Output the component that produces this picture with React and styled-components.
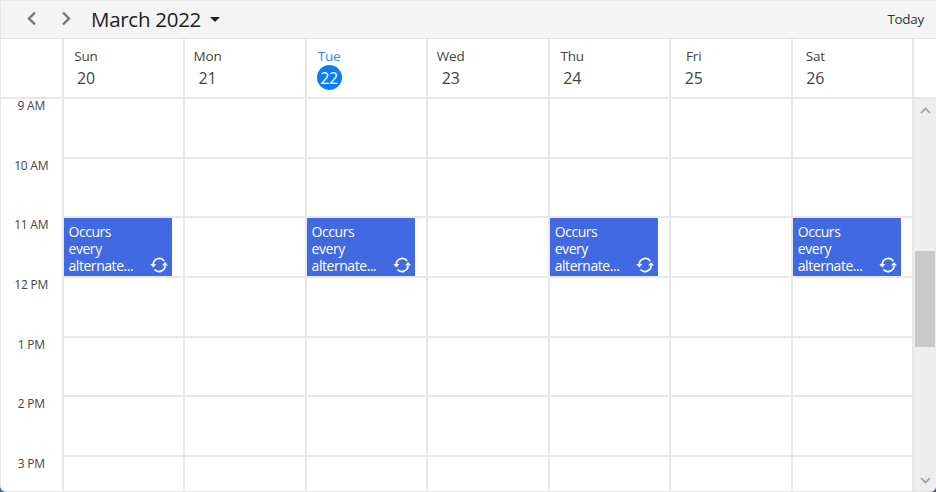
import React from "react";
import styled, { createGlobalStyle } from "styled-components";

const Global = createGlobalStyle`
  html, body { margin: 0; padding: 0; background: #3f5f8f; }
  * { box-sizing: border-box; }
`;

const Scheduler = styled.div`
  width: 936px;
  height: 492px;
  overflow: hidden;
  display: flex;
  flex-direction: column;
  font-family: "Open Sans", "Noto Sans", sans-serif;
  color: #333;
  background: #fff;
  border-left: 1px solid #e6e6e6;
  border-bottom: 1px solid #e6e6e6;
  border-radius: 0 0 6px 6px;
`;

const Toolbar = styled.div`
  height: 39px;
  flex: none;
  display: flex;
  align-items: center;
  background: #f4f4f4;
  border-bottom: 1px solid #e3e3e3;
  border-top: 1px solid #e8e8e8;
  padding: 0 12px 2px 24px;
`;

const NavButton = styled.button`
  width: 14px;
  height: 16px;
  padding: 0;
  margin-right: ${(p) => p.$gap}px;
  border: none;
  background: none;
  display: flex;
  align-items: center;
  justify-content: center;
`;

const Title = styled.div`
  font-size: 20.5px;
  letter-spacing: -0.28px;
  color: #222;
  margin-left: 3px;
`;

const Caret = styled.span`
  margin-left: 9px;
  margin-top: 1px;
  width: 0;
  height: 0;
  border-left: 5px solid transparent;
  border-right: 5px solid transparent;
  border-top: 5px solid #222;
`;

const Today = styled.div`
  margin-left: auto;
  font-size: 13.5px;
  letter-spacing: -0.3px;
  color: #333;
`;

const HeaderRow = styled.div`
  height: 60px;
  flex: none;
  display: grid;
  grid-template-columns: ${(p) => p.$columns};
  border-bottom: 2px solid #e6e6e6;
`;

const HeaderCell = styled.div`
  border-right: 2px solid #e8e8e8;
  color: ${(p) => (p.$today ? "#2f88f5" : "#444")};
`;

const DayBlock = styled.div`
  width: 45px;
  padding-top: 8px;
  display: flex;
  flex-direction: column;
  align-items: center;
`;

const DayName = styled.div`
  font-size: 13.5px;
  line-height: 19px;
  letter-spacing: -0.2px;
`;

const DayNumber = styled.div`
  width: 25px;
  height: 25px;
  margin-top: -1px;
  border-radius: 50%;
  display: flex;
  align-items: center;
  justify-content: center;
  font-size: 16px;
  letter-spacing: -0.2px;
  background: ${(p) => (p.$today ? "#0a7cf5" : "transparent")};
  color: ${(p) => (p.$today ? "#fff" : "#444")};
`;

const Body = styled.div`
  flex: 1;
  min-height: 0;
  display: flex;
  overflow: hidden;
`;

const Grid = styled.div`
  flex: 1;
  min-width: 0;
  display: grid;
  grid-template-columns: ${(p) => p.$columns};
  grid-auto-rows: 59.7px;
  align-content: start;
`;

const TimeCell = styled.div`
  border-right: 2px solid #e8e8e8;
  text-align: center;
  font-size: 12px;
  line-height: 14px;
  letter-spacing: -0.2px;
  color: #444;
`;

const SlotCell = styled.div`
  position: relative;
  border-right: 2px solid #e8e8e8;
  border-bottom: 2px solid #e8e8e8;
`;

const Event = styled.div`
  position: absolute;
  left: 0;
  top: 0;
  width: 108px;
  height: 58px;
  background: #4169e1;
  color: #fff;
  padding: 5px 0 0 5px;
  font-size: 14px;
  line-height: 17px;
  letter-spacing: -0.45px;
`;

const EventIcon = styled.svg`
  position: absolute;
  right: 3px;
  bottom: 3px;
`;

const Scrollbar = styled.div`
  width: 22px;
  flex: none;
  background: #eeeeee;
  display: flex;
  flex-direction: column;
  align-items: center;
  padding: 0 1px;
`;

const ArrowBox = styled.div`
  height: 22px;
  display: flex;
  align-items: center;
  justify-content: center;
`;

const Thumb = styled.div`
  width: 20px;
  height: 96px;
  margin-top: 130px;
  background: #cacaca;
`;

const Spacer = styled.div`
  flex: 1;
`;

const days = [
  ["Sun", 20],
  ["Mon", 21],
  ["Tue", 22],
  ["Wed", 23],
  ["Thu", 24],
  ["Fri", 25],
  ["Sat", 26],
];
const hours = ["9 AM", "10 AM", "11 AM", "12 PM", "1 PM", "2 PM", "3 PM"];
const eventDays = new Set(["Sun", "Tue", "Thu", "Sat"]);
const gridColumns = "62.5px repeat(7, 121.55px)";
const headerColumns = "62.5px repeat(7, 121.55px) 1fr";

const Chevron = ({ dir }) => (
  <svg width="12" height="15" viewBox="0 0 12 15" fill="none">
    <path
      d={dir === "left" ? "M9 1.5 L3 7.5 L9 13.5" : "M2 1.5 L8 7.5 L2 13.5"}
      stroke="#777"
      strokeWidth="2.4"
    />
  </svg>
);

const Recur = () => (
  <EventIcon width="19" height="16" viewBox="0 0 19 16" fill="none">
    <path d="M3.3 7.5 A6 6 0 0 1 14.2 4" stroke="#fff" strokeWidth="1.7" />
    <path d="M15 8.5 A6 6 0 0 1 4.5 12.5" stroke="#fff" strokeWidth="1.7" />
    <path d="M0.3 7 L6.3 7 L3.3 10.5 Z" fill="#fff" />
    <path d="M12 8.5 L18 8.5 L15 5 Z" fill="#fff" />
  </EventIcon>
);

const ScrollChevron = ({ up }) => (
  <svg width="11" height="7" viewBox="0 0 11 7" fill="none">
    <path d={up ? "M1 6 L5.5 1.5 L10 6" : "M1 1 L5.5 5.5 L10 1"} stroke="#a0a0a0" strokeWidth="1.6" />
  </svg>
);

export default function App() {
  return (
    <>
      <Global />
      <Scheduler>
        <Toolbar>
          <NavButton $gap={21}>
            <Chevron dir="left" />
          </NavButton>
          <NavButton $gap={14}>
            <Chevron dir="right" />
          </NavButton>
          <Title>March 2022</Title>
          <Caret />
          <Today>Today</Today>
        </Toolbar>
        <HeaderRow $columns={headerColumns}>
          <HeaderCell />
          {days.map(([name, num]) => (
            <HeaderCell key={name} $today={num === 22}>
              <DayBlock>
                <DayName>{name}</DayName>
                <DayNumber $today={num === 22}>{num}</DayNumber>
              </DayBlock>
            </HeaderCell>
          ))}
          <div />
        </HeaderRow>
        <Body>
          <Grid $columns={gridColumns}>
            {hours.map((hour) => (
              <React.Fragment key={hour}>
                <TimeCell>{hour}</TimeCell>
                {days.map(([name]) => (
                  <SlotCell key={name}>
                    {hour === "11 AM" && eventDays.has(name) && (
                      <Event>
                        Occurs
                        <br />
                        every
                        <br />
                        alternate...
                        <Recur />
                      </Event>
                    )}
                  </SlotCell>
                ))}
              </React.Fragment>
            ))}
          </Grid>
          <Scrollbar>
            <ArrowBox>
              <ScrollChevron up />
            </ArrowBox>
            <Thumb />
            <Spacer />
            <ArrowBox>
              <ScrollChevron />
            </ArrowBox>
          </Scrollbar>
        </Body>
      </Scheduler>
    </>
  );
}
